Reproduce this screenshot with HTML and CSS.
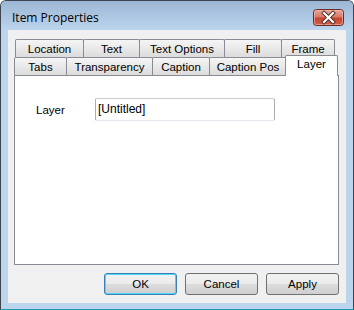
FILE: index.html
```html
<!DOCTYPE html>
<html lang="en">
<head>
  <meta charset="UTF-8">
  <title>Item Properties</title>
  <link rel="stylesheet" href="styles.css">
</head>
<body>

  <div class="window">
    <div class="titlebar">
      <span class="title">Item Properties</span>
      <button class="close-btn" aria-label="Close">
        <svg width="31" height="17" viewBox="0 0 31 17">
          <defs>
            <linearGradient id="redGrad" x1="0" y1="0" x2="0" y2="1">
              <stop offset="0" stop-color="#e9a99b"/>
              <stop offset="0.45" stop-color="#d77b6a"/>
              <stop offset="0.55" stop-color="#c4452f"/>
              <stop offset="1" stop-color="#d0644c"/>
            </linearGradient>
          </defs>
          <rect x="0.5" y="0.5" width="30" height="16" rx="3" fill="url(#redGrad)" stroke="#6e2a22"/>
          <rect x="1.5" y="1.5" width="28" height="14" rx="2" fill="none" stroke="#f0c0b4" stroke-opacity="0.6"/>
          <path d="M11 4 L20 13 M20 4 L11 13" stroke="#4a2a26" stroke-width="4" stroke-linecap="square"/>
          <path d="M11 4 L20 13 M20 4 L11 13" stroke="#ffffff" stroke-width="2.2" stroke-linecap="square"/>
        </svg>
      </button>
    </div>

    <div class="client">
      <div class="tabs">
        <div class="tab-row">
          <div class="tab w-location">Location</div>
          <div class="tab w-text">Text</div>
          <div class="tab w-textopt">Text Options</div>
          <div class="tab w-fill">Fill</div>
          <div class="tab w-frame">Frame</div>
        </div>
        <div class="tab-row front">
          <div class="tab w-tabs">Tabs</div>
          <div class="tab w-transp">Transparency</div>
          <div class="tab w-caption">Caption</div>
          <div class="tab w-captionpos">Caption Pos</div>
          <div class="tab w-layer active">Layer</div>
        </div>
      </div>

      <div class="panel">
        <div class="field">
          <label for="layer">Layer</label>
          <input type="text" id="layer" value="[Untitled]">
        </div>
      </div>

      <div class="buttons">
        <button class="btn default">OK</button>
        <button class="btn">Cancel</button>
        <button class="btn">Apply</button>
      </div>
    </div>
  </div>

</body>
</html>
```

FILE: styles.css
```css
* {
  box-sizing: border-box;
}

body {
  margin: 0;
  background: #ffffff;
  font-family: 'Liberation Sans', Arial, sans-serif;
  font-size: 11px;
  color: #000;
}

.window {
  width: 354px;
  height: 310px;
  border: 1px solid #3c4550;
  border-bottom-color: #1f9aae;
  border-radius: 6px 6px 0 0;
  background: #bcd4ec;
  display: flex;
  flex-direction: column;
}

.titlebar {
  height: 29px;
  display: flex;
  align-items: center;
  padding: 4px 9px 0 11px;
  background: linear-gradient(to bottom, #9cb7d5, #b2cbe6 70%, #bcd4ec);
  border-radius: 5px 5px 0 0;
}

.title {
  flex: 1;
  font-family: 'Open Sans', 'Liberation Sans', sans-serif;
  font-size: 12px;
  color: #000;
  padding-bottom: 1px;
}

.close-btn {
  border: none;
  background: none;
  padding: 0;
  width: 31px;
  height: 17px;
  margin-bottom: 1px;
}

.close-btn svg {
  display: block;
}

.client {
  flex: 1;
  margin: 0 7px 6px 7px;
  background: #f0f0f0;
  padding: 9px 6px 0 6px;
  display: flex;
  flex-direction: column;
}

.tabs {
  height: 36px;
  display: flex;
  flex-direction: column;
}

.tab-row {
  display: flex;
  height: 18px;
}

.tab-row:first-child {
  padding-left: 1px;
}

.tab {
  height: 18px;
  margin-right: -1px;
  border: 1px solid #898c95;
  border-bottom: none;
  border-radius: 2px 2px 0 0;
  background: linear-gradient(to bottom, #f5f5f5, #e9e9e9 50%, #dcdcdc);
  display: flex;
  justify-content: center;
  align-items: center;
  padding-top: 1px;
  font-size: 11.5px;
  position: relative;
}

.tab.active {
  background: #ffffff;
  height: 21px;
  margin-top: -2px;
  margin-right: 0;
  margin-left: -1px;
  z-index: 2;
  align-items: flex-start;
  padding-top: 2px;
}

.w-location { width: 69px; }
.w-text { width: 57px; }
.w-textopt { width: 86px; }
.w-fill { width: 58px; }
.w-frame { width: 54px; }
.w-tabs { width: 53px; }
.w-transp { width: 87px; }
.w-caption { width: 58px; }
.w-captionpos { width: 78px; }
.w-layer { width: 53px; }

.panel {
  width: 325px;
  height: 190px;
  border: 1px solid #898c95;
  background: #ffffff;
  padding: 22px 0 0 21px;
}

.field {
  display: flex;
  align-items: center;
}

.field label {
  width: 59px;
  font-size: 11.5px;
}

.field input {
  width: 180px;
  height: 23px;
  border: 1px solid #abadb3;
  border-top-color: #c9ccd3;
  border-bottom-color: #e3e9ef;
  border-radius: 2px;
  padding: 0 2px 2px 2px;
  font-family: 'Liberation Sans', Arial, sans-serif;
  font-size: 12px;
  color: #000;
  background: #fff;
}

.buttons {
  display: flex;
  justify-content: flex-end;
  gap: 8px;
  width: 325px;
  margin-top: 8px;
}

.btn {
  width: 73px;
  height: 22px;
  border: 1px solid #707070;
  border-radius: 3px;
  background: linear-gradient(to bottom, #f2f2f2, #ebebeb 50%, #dddddd 51%, #cfcfcf);
  font-family: 'Liberation Sans', Arial, sans-serif;
  font-size: 11.5px;
  color: #000;
  padding: 0;
}

.btn.default {
  border-color: #3c7fb1;
  box-shadow: inset 0 0 0 1px #48d8fb;
}
```
